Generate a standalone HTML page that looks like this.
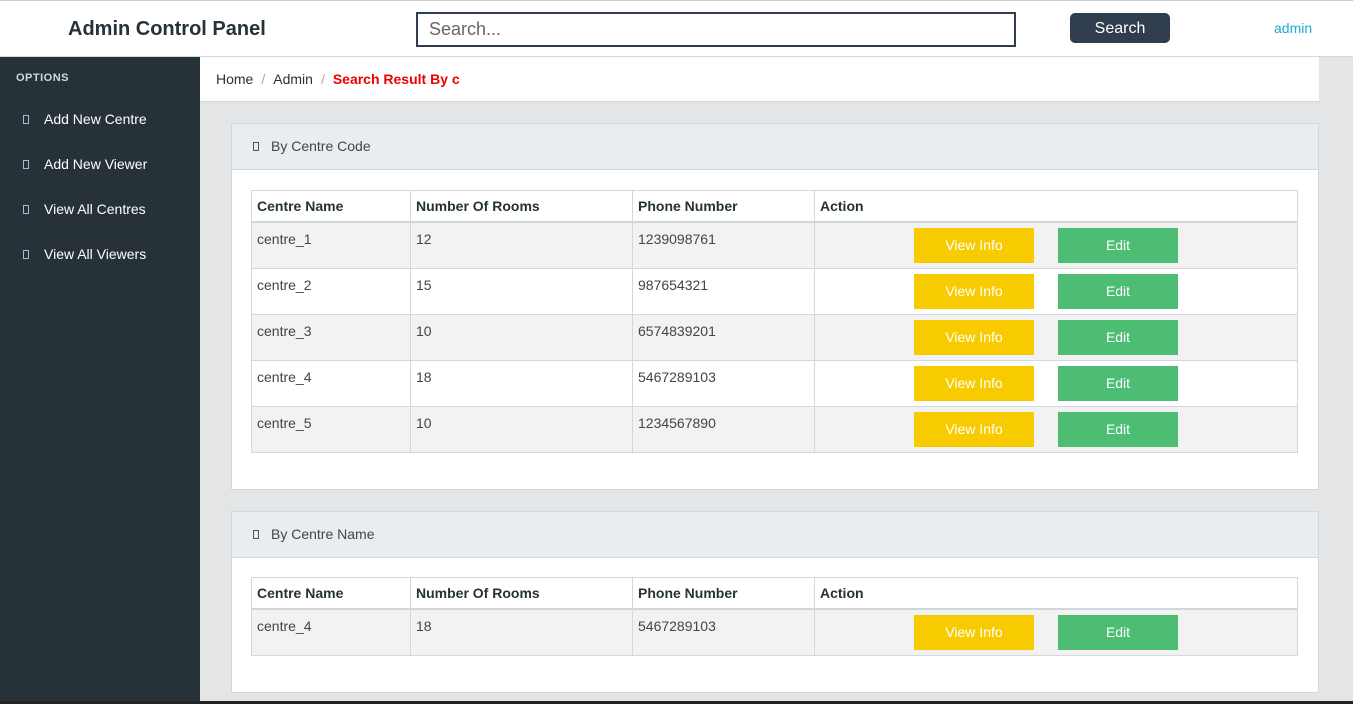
<!DOCTYPE html>
<html><head><style>
*{box-sizing:border-box;margin:0;padding:0}
body{width:1353px;height:704px;overflow:hidden;background:#e4e5e6;font-family:"Liberation Sans",Arial,sans-serif;position:relative}
.hdr{position:absolute;left:0;top:0;width:1353px;height:57px;background:#fff;border-top:1px solid #ccc;border-bottom:1px solid #cfd8dc}
.brand{position:absolute;left:68px;top:17px;font-size:20px;font-weight:bold;color:#263238}
.srch{position:absolute;left:416px;top:11px;width:600px;height:35px;border:2px solid #2f3d4e;font-size:18px;color:#666;padding:5px 11px}
.sbtn{position:absolute;left:1070px;top:12px;width:100px;height:30px;background:#2f3d4e;border-radius:5px;color:#fff;font-size:16px;text-align:center;line-height:31px}
.adm{position:absolute;left:1274px;top:19px;font-size:14px;color:#20a8d8}
.side{position:absolute;left:0;top:57px;width:200px;height:647px;background:#263238}
.opt{position:absolute;left:16px;top:15px;font-size:11px;font-weight:bold;color:#cfd8dc;letter-spacing:.5px}
.nav{position:absolute;left:23px;font-size:14px;color:#fff}
.nav span{display:inline-block;width:6px;height:9px;border:1px solid #a9b8d0;margin-right:15px}
.bc{position:absolute;left:200px;top:57px;width:1119px;height:45px;background:#fff;border-bottom:1px solid #cfd8dc;font-size:14px;padding:14px 16px;color:#263238}
.bc i{font-style:normal;color:#aaa;margin:0 8px}
.bc b{color:#e00}
.card{position:absolute;left:231px;width:1088px;background:#fff;border:1px solid #cfd8dc}
.ch{height:46px;background:#e9edf0;border-bottom:1px solid #cfd8dc;font-size:14px;color:#444;padding:14px 21px}
.ch span{display:inline-block;width:6px;height:9px;border:1px solid #555;margin-right:12px}
table{position:absolute;left:19px;border-collapse:collapse;width:1047px;font-size:14px;color:#444}
td,th{border:1px solid #cfd8dc;text-align:left;vertical-align:top;padding:8px 5px}
th{height:31px;padding:7px 5px;border-bottom:2px solid #cfd8dc;color:#263238}
td{height:46px}
tr.g td{background:#f2f2f2}
.a{position:relative}
.vb,.eb{position:absolute;top:5px;width:120px;height:35px;color:#fff;text-align:center;line-height:35px;font-size:14px}
.vb{left:99px;background:#f8cb00}.eb{left:243px;background:#4dbd74}
</style></head><body>
<div class="hdr"><div class="brand">Admin Control Panel</div><div class="srch">Search...</div><div class="sbtn">Search</div><div class="adm">admin</div></div>
<div class="side"><div class="opt">OPTIONS</div>
<div class="nav" style="top:54px"><span></span>Add New Centre</div>
<div class="nav" style="top:99px"><span></span>Add New Viewer</div>
<div class="nav" style="top:144px"><span></span>View All Centres</div>
<div class="nav" style="top:189px"><span></span>View All Viewers</div></div>
<div class="bc">Home<i>/</i>Admin<i>/</i><b>Search Result By c</b></div>
<div class="card" style="top:123px;height:367px"><div class="ch"><span></span>By Centre Code</div>
<table style="top:66px"><colgroup><col style="width:159px"><col style="width:222px"><col style="width:182px"><col></colgroup>
<tr><th>Centre Name</th><th>Number Of Rooms</th><th>Phone Number</th><th>Action</th></tr>
<tr class="g"><td>centre_1</td><td>12</td><td>1239098761</td><td class="a"><div class="vb">View Info</div><div class="eb">Edit</div></td></tr>
<tr><td>centre_2</td><td>15</td><td>987654321</td><td class="a"><div class="vb">View Info</div><div class="eb">Edit</div></td></tr>
<tr class="g"><td>centre_3</td><td>10</td><td>6574839201</td><td class="a"><div class="vb">View Info</div><div class="eb">Edit</div></td></tr>
<tr><td>centre_4</td><td>18</td><td>5467289103</td><td class="a"><div class="vb">View Info</div><div class="eb">Edit</div></td></tr>
<tr class="g"><td>centre_5</td><td>10</td><td>1234567890</td><td class="a"><div class="vb">View Info</div><div class="eb">Edit</div></td></tr>
</table></div>
<div class="card" style="top:511px;height:182px"><div class="ch"><span></span>By Centre Name</div>
<table style="top:65px"><colgroup><col style="width:159px"><col style="width:222px"><col style="width:182px"><col></colgroup>
<tr><th>Centre Name</th><th>Number Of Rooms</th><th>Phone Number</th><th>Action</th></tr>
<tr class="g"><td>centre_4</td><td>18</td><td>5467289103</td><td class="a"><div class="vb">View Info</div><div class="eb">Edit</div></td></tr>
</table></div>
<div style="position:absolute;left:0;top:701px;width:1353px;height:3px;background:#222"></div>
</body></html>
